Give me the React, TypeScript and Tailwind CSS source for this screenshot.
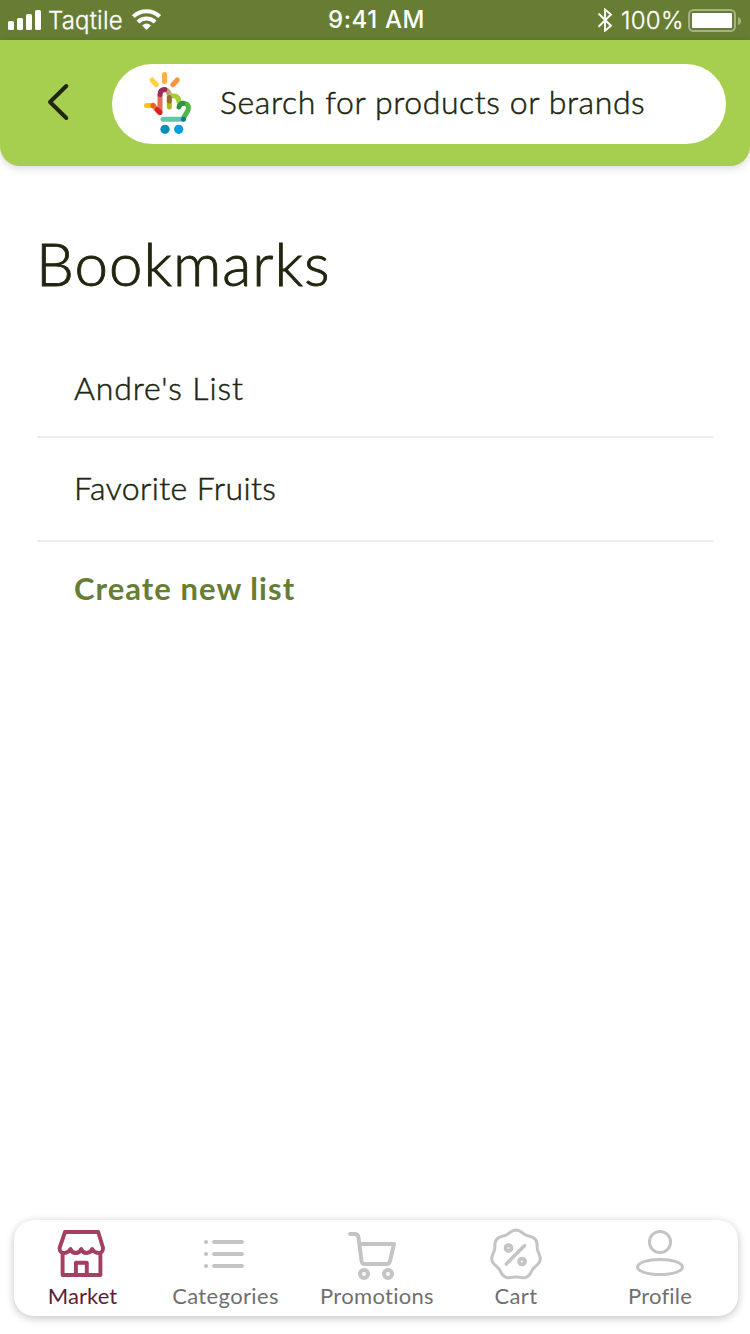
import type { ReactNode } from "react";

function StatusBar() {
  return (
    <div className="flex h-10 w-full items-center bg-[#667d33] text-white font-['Inter',sans-serif] text-[24px] leading-10">
      <div className="flex w-[328px] items-center pl-2">
        <svg width="34" height="20" viewBox="8 10 34 20" fill="#fff">
          <rect x="8" y="21" width="6" height="9" rx="1.5" />
          <rect x="17" y="18" width="6" height="12" rx="1.5" />
          <rect x="26" y="14" width="6" height="16" rx="1.5" />
          <rect x="35" y="10" width="6" height="20" rx="1.5" />
        </svg>
        <span className="ml-[6px] mt-[2px] w-[83px] font-light tracking-[0.2px] [-webkit-text-stroke:0.3px_white]">Taqtile</span>
        <svg width="30" height="22" viewBox="131 9 30 22" fill="none" stroke="#fff" strokeWidth="4">
          <path d="M133.3 16.6a19 19 0 0 1 26.4 0" />
          <path d="M137.9 22a12.4 12.4 0 0 1 17.2 0" />
          <path d="M146.5 30l-4.5-4.5q4.5-3.8 9 0z" fill="#fff" stroke="none" />
        </svg>
      </div>
      <span className="w-[269px] font-medium tracking-[0.6px]">9:41 AM</span>
      <svg width="16" height="24" viewBox="597 8 16 24" fill="none" stroke="#fff" strokeWidth="1.9">
        <path d="M598.5 13.5l12.5 12.2-6 5V9.5l6 5-12.5 12.2" />
      </svg>
      <span className="ml-[8px] mt-[2px] w-[67px] font-light tracking-[0.3px] [-webkit-text-stroke:0.3px_white]">100%</span>
      <svg width="54" height="24" viewBox="688 8 54 24" fill="none">
        <rect x="689" y="10" width="46" height="21" rx="4.5" stroke="#a3b185" strokeWidth="2" />
        <rect x="692" y="13" width="40" height="15" rx="1" fill="#fff" />
        <path d="M738 17q3 1 3 4t-3 4z" fill="#a3b185" />
      </svg>
    </div>
  );
}

function Logo() {
  return (
    <svg width="50" height="66" viewBox="143 70 50 66" fill="none" strokeWidth="5" strokeLinecap="round" className="mb-[2px] shrink-0">
      <path d="M164.5 74.5v7" stroke="#fbb040" />
      <path d="M152 80l4.5 4.8" stroke="#ffd13f" />
      <path d="M177.3 80l-4.5 4.8" stroke="#f7943d" />
      <path d="M160 96v16" stroke="#e07058" />
      <path d="M146.5 105.5h6" stroke="#ffc20e" />
      <path d="M153 105.5l6.5 7" stroke="#f6921e" />
      <path d="M153 105.5h.1" stroke="#f15a29" />
      <path d="M157 109.5l3 3" stroke="#d9202a" />
      <path d="M165 89.6q4.3 1 4.3 6.4" stroke="#c49a70" />
      <path d="M160 94.5q0-5 4.8-5" stroke="#9e2a5b" />
      <path d="M169.3 101v6" stroke="#b5b51e" />
      <path d="M169.6 96.8c3-2 9-1.5 9.2 4.5" stroke="#a6ce39" />
      <path d="M169.3 97.5v3.5" stroke="#9c6b24" />
      <path d="M182.5 103.3q7.5 0 5.4 7.2l-4.4 7.5" stroke="#4db848" />
      <path d="M179 107q.5-3.3 3.8-3.8" stroke="#2e9144" />
      <path d="M163 119.3h18" stroke="#62c6af" />
      <path d="M183.4 119.3h.1" stroke="#0b7a8f" />
      <circle cx="165" cy="129.3" r="4.6" fill="#008fb8" />
      <circle cx="178.7" cy="129.3" r="4.6" fill="#009de0" />
    </svg>
  );
}

function StoreIcon() {
  return (
    <svg width="50" height="50" viewBox="56 1229 50 50" fill="none" stroke="#a33f61" strokeWidth="3.9" strokeLinejoin="round">
      <path d="M65 1232h33.2l4.8 15.8q.2 5.2-4.8 5.2-4 0-6-4-1.7 4-5.6 4t-5.4-4q-1.5 4-5.4 4t-5.4-4q-1.8 4-6 4-5 0-4.8-5.2z" />
      <path d="M62.6 1253v22h37.8V1253M75.9 1275v-12.3h10.9V1275" />
    </svg>
  );
}

function ListIcon() {
  return (
    <svg width="50" height="50" viewBox="199 1229 50 50" fill="none" stroke="#c4c4c4" strokeWidth="4" strokeLinecap="round">
      <path d="M206 1242h.01M214 1242h28M206 1254h.01M214 1254h28M206 1266h.01M214 1266h28" />
    </svg>
  );
}

function TrolleyIcon() {
  return (
    <svg width="50" height="50" viewBox="347 1229 50 50" fill="none" stroke="#c4c4c4" strokeWidth="4" strokeLinecap="round" strokeLinejoin="round" className="overflow-visible">
      <path d="M350 1234h4.5q3.5 0 4 3.5l3 23.5q.5 3 3 3h22q3 0 3.5-3l4-17h-33.5" />
      <circle cx="364" cy="1274" r="4" />
      <circle cx="388" cy="1274" r="4" />
    </svg>
  );
}

const BADGE = Array.from({ length: 113 }, (_, i) => {
  const a = (i / 112) * Math.PI * 2 - Math.PI / 2;
  const r = 23.4 + 1.3 * Math.cos(7 * (a + Math.PI / 2));
  return `${i ? "L" : "M"}${(516.5 + r * Math.cos(a)).toFixed(2)} ${(1254.8 + r * Math.sin(a)).toFixed(2)}`;
}).join("");

function PercentIcon() {
  return (
    <svg width="54" height="50" viewBox="489.5 1229 54 50" fill="none" stroke="#c4c4c4" strokeWidth="3" strokeLinecap="round" strokeLinejoin="round" className="overflow-visible">
      <path d={BADGE} />
      <path d="M506.8 1264l18.3-18.5" strokeWidth="3.4" />
      <circle cx="509" cy="1248" r="2.9" strokeWidth="3.9" />
      <circle cx="522.5" cy="1261.5" r="2.9" strokeWidth="3.9" />
    </svg>
  );
}

function ProfileIcon() {
  return (
    <svg width="50" height="50" viewBox="635 1229 50 50" fill="none" stroke="#c4c4c4" strokeWidth="3">
      <circle cx="660" cy="1242" r="10.6" />
      <ellipse cx="660" cy="1267" rx="22.5" ry="7.6" />
    </svg>
  );
}

function Tab({ label, icon, box, iconPad, text }: { label: string; icon: ReactNode; box: string; iconPad: string; text: string }) {
  return (
    <div className={`flex flex-col items-center ${box}`}>
      <div className={`flex h-[60px] items-center justify-center pt-[8px] ${iconPad}`}>{icon}</div>
      <span className={`whitespace-nowrap text-[22px] leading-[32px] ${text}`}>{label}</span>
    </div>
  );
}

export default function App() {
  return (
    <div className="flex h-[1334px] w-[750px] flex-col overflow-hidden bg-white font-['Lato',sans-serif] text-[#20260f]">
      <StatusBar />
      <header className="flex h-[126px] shrink-0 items-center rounded-b-[20px] bg-[#a7cf4f] pl-[46px] pr-6 shadow-[0_2px_8px_rgba(0,0,0,0.16)]">
        <svg width="24" height="40" viewBox="46 82 24 40" fill="none" stroke="#20260f" strokeWidth="4" strokeLinecap="round" strokeLinejoin="round" className="mb-[2px] mr-[42px] shrink-0">
          <path d="M66.3 86L50 102l16.3 16" />
        </svg>
        <div className="mt-[2px] flex h-20 flex-1 items-center rounded-full bg-white pl-[31px]">
          <Logo />
          <span className="mb-[4px] ml-[27px] whitespace-nowrap text-[32px] font-light tracking-[0.6px] [-webkit-text-stroke:0.5px_#20260f]">Search for products or brands</span>
        </div>
      </header>
      <main className="flex flex-1 flex-col px-[37px] pt-[57px]">
        <h1 className="-ml-px whitespace-nowrap text-[60px] font-light leading-[80px] tracking-[1px] [-webkit-text-stroke:0.9px_#20260f]">Bookmarks</h1>
        <ul className="mt-[39px] text-[32px]">
          <li className="flex h-[96px] items-center border-b-2 border-[#ebebeb] pb-[2px] pl-[37px] font-light tracking-[0.9px] [-webkit-text-stroke:0.5px_#20260f]">Andre's List</li>
          <li className="flex h-[104px] items-center border-b-2 border-[#ebebeb] pb-[2px] pl-[37px] font-light tracking-[0.4px] [-webkit-text-stroke:0.5px_#20260f]">Favorite Fruits</li>
          <li className="flex h-[96px] items-center pb-[3px] pl-[37px] text-[31px] font-bold tracking-[1.05px] text-[#667d33]">Create new list</li>
        </ul>
      </main>
      <nav className="mb-[18px] ml-[14px] mr-[12px] flex h-24 shrink-0 rounded-[20px] bg-white text-[#707070] shadow-[0_2px_8px_rgba(0,0,0,0.24)]">
        <Tab label="Market" icon={<StoreIcon />} box="w-[137px]" iconPad="pr-[3px]" text="text-[#5b1f38] tracking-[0.1px]" />
        <Tab label="Categories" icon={<ListIcon />} box="w-[149px]" iconPad="pr-[3px]" text="tracking-[0.35px]" />
        <Tab label="Promotions" icon={<TrolleyIcon />} box="w-[154px]" iconPad="pr-[10px]" text="tracking-[0.3px]" />
        <Tab label="Cart" icon={<PercentIcon />} box="w-[124px]" iconPad="" text="tracking-[0.4px]" />
        <Tab label="Profile" icon={<ProfileIcon />} box="w-[160px] pl-[4px]" iconPad="" text="tracking-[0.2px]" />
      </nav>
    </div>
  );
}
